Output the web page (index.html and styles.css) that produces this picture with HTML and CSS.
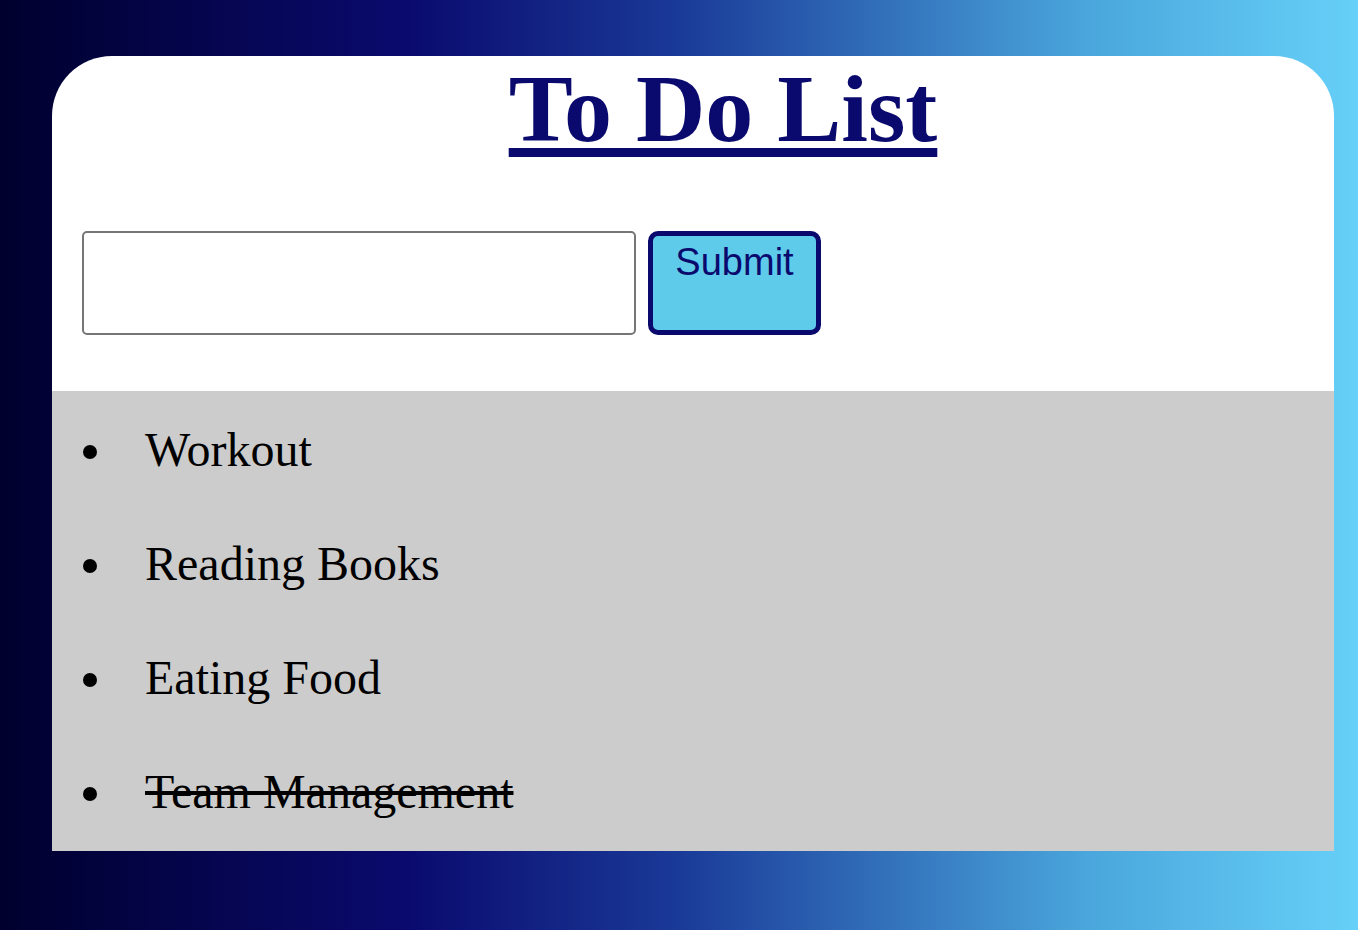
FILE: index.html
```html
<!DOCTYPE html>
<html lang="en">
<head>
<meta charset="utf-8">
<title>To Do List</title>
<link rel="stylesheet" href="styles.css">
</head>
<body>
  <main class="card">
    <h1 class="title">To Do List</h1>
    <form class="entry">
      <input class="entry-input" type="text" aria-label="New task">
      <button class="entry-button" type="button">Submit</button>
    </form>
    <ul class="tasks">
      <li class="task">Workout</li>
      <li class="task">Reading Books</li>
      <li class="task">Eating Food</li>
      <li class="task task-done">Team Management</li>
    </ul>
  </main>
</body>
</html>
```

FILE: styles.css
```css
html, body {
  margin: 0;
  height: 100%;
}

body {
  box-sizing: border-box;
  padding: 56px 24px 0 52px;
  background: linear-gradient(to right, #00002e 0%, #0a0a6e 30%, #1a3a98 50%, #4aa6dc 80%, #66d0f8 100%);
  font-family: "Liberation Serif", "Times New Roman", serif;
}

.card {
  background: #ffffff;
  border-radius: 60px 60px 0 0;
  overflow: hidden;
}

.title {
  margin: 0;
  padding-left: 60px;
  text-align: center;
  font-family: "Liberation Serif", "Times New Roman", serif;
  font-weight: 700;
  font-size: 96px;
  line-height: 106px;
  color: #0a0a6e;
  text-decoration: underline;
  text-decoration-thickness: 9px;
  text-underline-offset: 7px;
}

.entry {
  display: flex;
  gap: 12px;
  padding: 69px 30px 56px;
  margin: 0;
}

.entry-input {
  box-sizing: border-box;
  width: 554px;
  height: 104px;
  margin: 0;
  border: 2px solid #767676;
  border-radius: 5px;
  background: #ffffff;
  font-size: 20px;
}

.entry-button {
  box-sizing: border-box;
  width: 173px;
  height: 104px;
  margin: 0;
  display: flex;
  justify-content: center;
  align-items: flex-start;
  padding: 5px 0 0;
  border: 5px solid #0a0a6e;
  border-radius: 10px;
  background: #5ecbea;
  color: #0a0a6e;
  font-family: "Liberation Sans", Arial, sans-serif;
  font-size: 38px;
}

.tasks {
  margin: 0;
  padding: 2px 0 2px 66px;
  background: #cccccc;
  list-style: disc outside;
}

.task {
  padding: 30px 0 30px 27px;
  font-size: 48px;
  line-height: 54px;
  color: #000000;
}

.task-done {
  text-decoration: line-through;
}
```
